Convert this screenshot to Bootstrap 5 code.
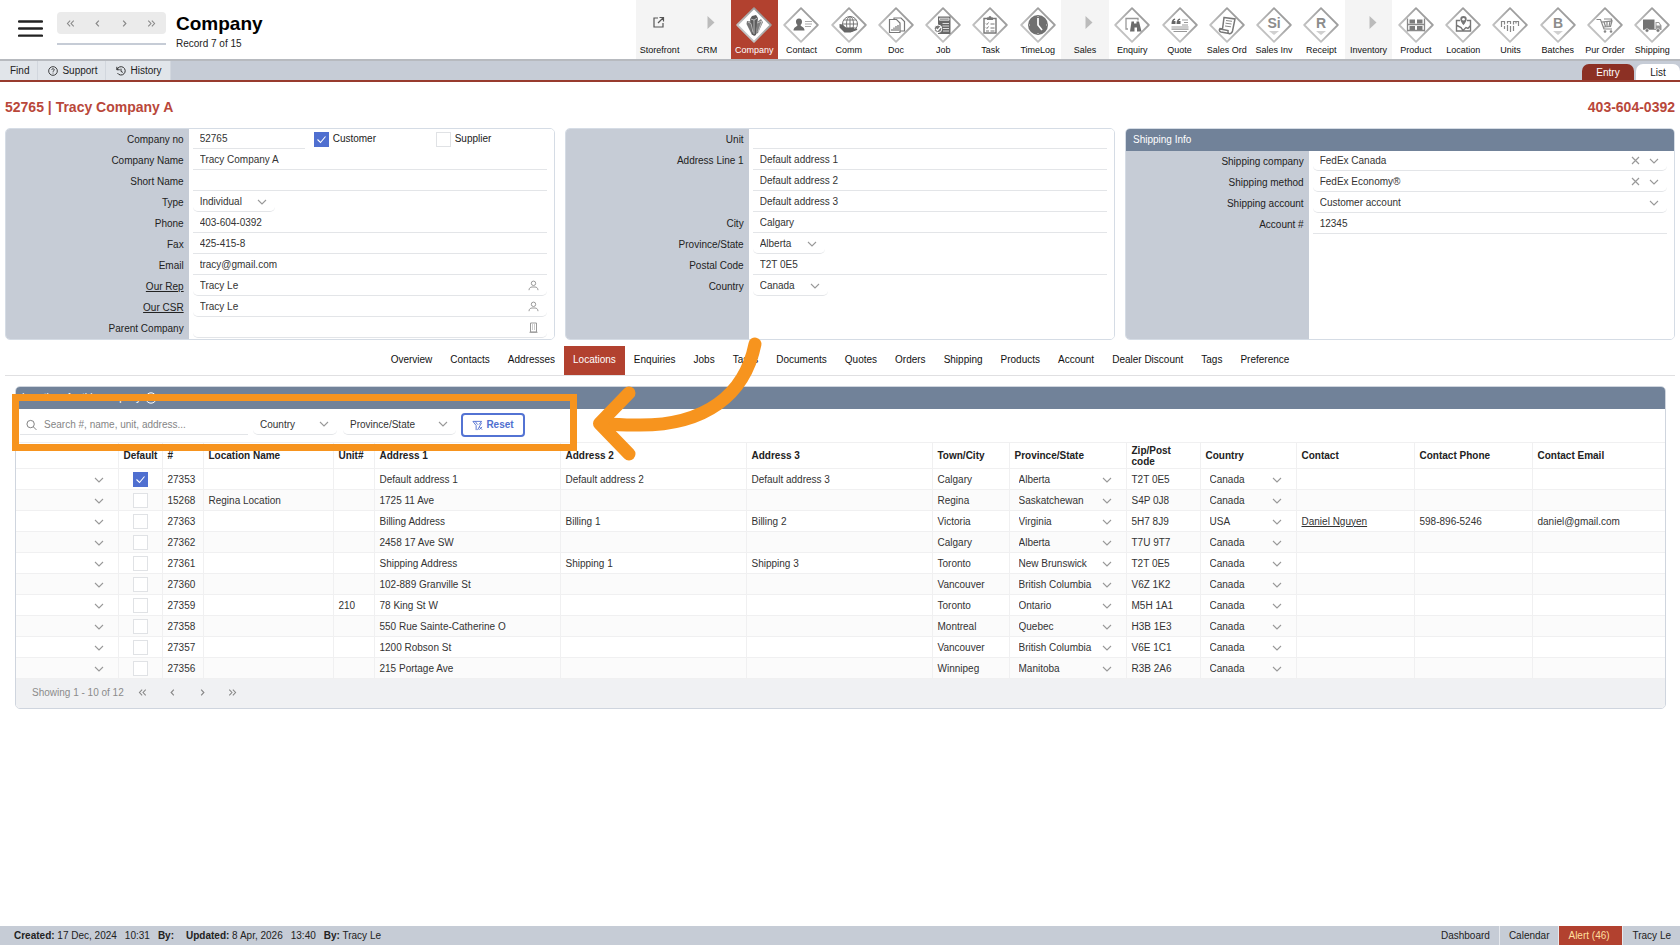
<!DOCTYPE html>
<html lang="en">
<head>
<meta charset="utf-8">
<meta name="viewport" content="width=device-width, initial-scale=1">
<title>Company – Tracy Company A</title>
<link href="https://cdn.jsdelivr.net/npm/bootstrap@5.3.0/dist/css/bootstrap.min.css" rel="stylesheet">
<style>
:root{--brick:#b2412f;--slate:#718299;--mist:#c6ccd6;--ink:#222;--hair:#e3e5e8;--orange:#f7941e;
--chev:url("data:image/svg+xml,%3Csvg xmlns='http://www.w3.org/2000/svg' viewBox='0 0 10 10'%3E%3Cpath d='M1 3l4 4 4-4' fill='none' stroke='%23999' stroke-width='1.1'/%3E%3C/svg%3E");
--tick:url("data:image/svg+xml,%3Csvg xmlns='http://www.w3.org/2000/svg' viewBox='0 0 15 15'%3E%3Cpath d='M3.5 7.5l3 3 5-6' fill='none' stroke='%23fff' stroke-width='1.1'/%3E%3C/svg%3E")}
body{font-family:"Liberation Sans",Arial,sans-serif;font-size:10px;line-height:12px;color:var(--ink);background:#fff}
a{color:inherit}
button{color:inherit}
/* top bar */
.topbar{height:61px;border-bottom:2px solid #b7babf}
.burger{width:25px;height:25px;margin:16px 0 0 18px}
.pager-col{width:109px;margin-left:14px}
.pager{height:22px;background:#ebebeb;border-radius:4px}
.pager-line{height:2px;background:var(--mist);margin-top:9px}
.pg{border:0;background:none;padding:0;width:27px;line-height:0}
.pg svg{width:9px;height:9px}
.heading{padding:12px 0 0 10px}
.page-title{font-size:19px;line-height:24px;font-weight:700;color:#000}
.page-sub{padding-top:2px}
.modules{width:1040px;margin-right:4px}
.module{flex:1 1 0;min-width:0;height:59px;text-align:center;text-decoration:none;font-size:9px;line-height:12px;color:#111;padding-top:7px;white-space:nowrap}
.module svg{width:36px;height:36px;display:block;margin:0 auto 1px}
.module.group{background:#f4f4f4}
.module.current{background:var(--brick);color:#fff}
/* secondary bar */
.subbar{height:21px;background:var(--mist);border-bottom:2px solid #983b2e}
.subbar .act{background:#e1e5ea;border:0;border-right:1px solid #d2d7de;padding:0 8px 0 10px;font-size:10px}
.subbar .act svg{width:10px;height:10px;margin-right:4px}
.mode{height:16px;border-radius:7px 7px 0 0;background:#fff;text-decoration:none;text-align:center;line-height:17px}
.mode.current{background:#8c3024;color:#fff;width:52px;margin-right:2px}
.mode.other{width:44px}
.record-head{height:46px;padding:4px 5px 0;font-size:14px;line-height:18px;font-weight:700;color:#b9473a}
/* field panels */
.panels{display:grid;grid-template-columns:repeat(3,1fr);gap:10px;padding:0 5px}
.panel{border:1px solid #d5dce5;border-radius:5px;overflow:hidden;min-height:212px;background:#fff}
.panel-head{background:var(--slate);color:#fff;height:22px;line-height:21px;padding-left:7px}
.fields{display:grid;grid-template-columns:1fr 2fr;grid-auto-rows:21px;background:linear-gradient(to right,var(--mist) 33.333%,#fff 33.333%);flex:1;align-content:start}
.fields>.lab{text-align:right;padding-right:5px;line-height:22px}
.fields>.val{padding:0 7px 0 4px;display:flex;align-items:center;height:20px}
.box{border:0;border-bottom:1px solid var(--hair);background:transparent;height:20px;padding:0 0 1px 7px;font-size:10px;line-height:18px;color:#333;width:100%;min-width:0;outline:0;border-radius:0}
.pick{appearance:none;border:0;border-bottom:1px solid var(--hair);border-radius:5px;background:transparent var(--chev) no-repeat right 8px center/10px;height:20px;padding:0 24px 0 7px;font-size:10px;color:#333;outline:0}
.pick.full{width:100%}
.w-type{width:82px}.w-prov{width:72px}.w-ctry{width:75px}.w-no{width:112px}
.slot{position:relative;width:100%}
.slot .box{border-radius:5px}
.slot .end{position:absolute;right:8px;top:4px;width:11px;height:11px;padding:0;border:0;background:none;line-height:0}
.slot .end.clear{right:26px}
.slot .end svg{width:11px;height:11px}
.tickbox{appearance:none;width:15px;height:15px;border:1px solid #e0e2e5;background:#fff center/15px no-repeat;margin:0;flex:none;display:block}
.tickbox:checked{background-color:#4f6fd0;border-color:#4f6fd0;background-image:var(--tick)}
.flag{display:flex;align-items:center;gap:4px}
.gap-a{margin-left:9px;width:122px}
/* tabs */
.tabs{margin:6px 5px 0;border-bottom:1px solid #e0e0e2;height:30px;line-height:28px}
.tabs a{padding:0 9px;text-decoration:none;height:29px;color:#111}
.tabs a.current{background:var(--brick);color:#fff}
/* locations */
.locations{margin:10px 14px 0 15px;border:1px solid #cfd5de;border-radius:5px;overflow:hidden}
.loc-head{background:var(--slate);color:#fff;height:22px;line-height:22px;padding-left:6px}
.loc-head svg{width:12px;height:12px;margin-left:4px}
.filters{height:33px;padding:4px 4px 0}
.find{width:228px;border-bottom:1px solid var(--hair);height:22px}
.find svg{width:12px;height:12px;margin:2px 0 0 6px}
.find .box{border:0;padding:2px 0 0 7px}
.find .box::placeholder{color:#858585;opacity:1}
.filters .pick{height:22px;padding-top:2px;background-color:#fff}
.f-ctry{width:84px;margin-left:5px}.f-prov{width:113px;margin:0 5px 0 6px}
.reset{width:64px;height:24px;border:2px solid #5373d3;border-radius:4px;background:#fff;color:#4f6fd0;padding:0;font-weight:700}
.reset svg{width:11px;height:11px;margin-right:3px}
.grid{table-layout:fixed;width:100%;border-collapse:collapse;margin:0}
.grid th,.grid td{border:1px solid #f0f0f1;padding:0 4px 0 5px;height:21px;line-height:12px;vertical-align:middle;white-space:nowrap;overflow:hidden}
.grid th{height:26px;line-height:11px;font-weight:700;white-space:normal}
.grid tr>:first-child{border-left:0}.grid tr>:last-child{border-right:0}
.grid tbody tr:nth-child(even){background:#fbfbfb}
.grid tbody td{color:#333;padding-top:1px}
.grid .pick{border:0;height:18px;width:100%;padding-left:4px;display:block;background-position:right 10px center}
.c1{width:102px}.c2{width:44px}.c3,.c5{width:41px}.c4{width:130px}.c9{width:77px}.c10{width:117px}.c11{width:74px}.c12{width:96px}.c13,.c14{width:118px}.c15{width:133px}
.grid-foot{height:29px;background:#f0f1f3;color:#8b8b8b;padding:0 0 2px 16px}
.grid-foot .pg{width:30px}
/* callout drawn over the filter row */
.stage{position:relative}
.callout{position:absolute;left:12px;top:8px;width:565px;height:57px;border:7px solid var(--orange);pointer-events:none}
.arrow{position:absolute;left:580px;top:-52px;width:190px;height:130px;pointer-events:none}
/* status bar */
.status{height:19px;background:var(--mist);line-height:20px;padding-left:14px}
.status a{padding:0 9px;text-decoration:none;border-left:1px solid #e6e9ee}
.status a.alerting{background:var(--brick);color:#ffdf9e;width:64px}
.status .set{margin-right:8px}
.status .set-end{margin-right:12px}
</style>
</head>
<body class="d-flex flex-column min-vh-100">
<svg width="0" height="0" class="position-absolute" aria-hidden="true">
<defs>
<linearGradient id="edge" x1="1" y1="0" x2="0" y2="1"><stop offset="0" stop-color="#8d8d8d"/><stop offset="1" stop-color="#d2d2d2"/></linearGradient>
<symbol id="dia" viewBox="0 0 36 36"><path d="M18 1.2L34.8 18 18 34.8 1.2 18z" fill="#fff" stroke="url(#edge)" stroke-width="1.8" stroke-linejoin="round"/></symbol>
<symbol id="l1" viewBox="0 0 10 10"><path d="M6.5 1.8L3.5 5l3 3.2" fill="none" stroke="#888" stroke-width="1.3"/></symbol>
<symbol id="r1" viewBox="0 0 10 10"><path d="M3.5 1.8L6.5 5l-3 3.2" fill="none" stroke="#888" stroke-width="1.3"/></symbol>
<symbol id="l2" viewBox="0 0 10 10"><path d="M4.6 1.8L1.6 5l3 3.2M8.6 1.8L5.6 5l3 3.2" fill="none" stroke="#888" stroke-width="1.2"/></symbol>
<symbol id="r2" viewBox="0 0 10 10"><path d="M1.4 1.8L4.4 5l-3 3.2M5.4 1.8L8.4 5l-3 3.2" fill="none" stroke="#888" stroke-width="1.2"/></symbol>
<symbol id="person" viewBox="0 0 11 11"><circle cx="5.5" cy="3.300" r="2.200" fill="none" stroke="#999"/><path d="M1 10.200C1 8 2.500 7 4 7h3c1.500 0 3 1 3 3.200" fill="none" stroke="#999"/></symbol>
<symbol id="cross" viewBox="0 0 11 11"><path d="M2 2l7 7M9 2L2 9" stroke="#999" stroke-width="1.200"/></symbol>
</defs></svg>

<header class="topbar d-flex align-items-start">
  <button class="burger border-0 bg-transparent p-0" type="button" aria-label="Menu"><svg class="d-block" width="25" height="25" viewBox="0 0 25 25"><path d="M1 5.500h23M1 12.500h23M1 19.700h23" stroke="#222" stroke-width="2.300" stroke-linecap="round"/></svg></button>
  <div class="pager-col pt-1">
    <div class="mt-2 pager d-flex align-items-center">
      <button class="pg" type="button" aria-label="First record"><svg><use href="#l2"/></svg></button>
      <button class="pg" type="button" aria-label="Previous record"><svg><use href="#l1"/></svg></button>
      <button class="pg" type="button" aria-label="Next record"><svg><use href="#r1"/></svg></button>
      <button class="pg" type="button" aria-label="Last record"><svg><use href="#r2"/></svg></button>
    </div>
    <div class="pager-line"></div>
  </div>
  <div class="heading">
    <h1 class="page-title mb-0">Company</h1>
    <div class="page-sub">Record 7 of 15</div>
  </div>
  <nav class="modules d-flex ms-auto" aria-label="Modules">
    <a class="module group" href="#"><svg viewBox="0 0 36 36"><path d="M16 11h-4v9h9v-4M16 16l5-5m-3.500-.5h4V14.500" fill="none" stroke="#555" stroke-width="1.200"/></svg>Storefront</a>
    <a class="module group" href="#"><svg viewBox="0 0 36 36"><path d="M18.500 9l7 6.500-7 6.500z" fill="#bbb"/></svg>CRM</a>
    <a class="module current" href="#" aria-current="page"><svg viewBox="0 0 36 36"><use href="#dia"/><path d="M16 28l-5.500-11 .5-3 4 .5L18 28z" fill="#777"/><path d="M16 27l-2-15 2-3 4-1 2 3-2 17-2 1z" fill="#5c5c5c"/><path d="M20 27l1-12 4-3 2 3-5 11z" fill="#808080"/><path d="M12 15l3 1.500 2 9M14.500 12l3.500 1 3.500-2M18 13v14M21 16l5-2-4 11" stroke="#ddd" stroke-width=".7" fill="none"/></svg>Company</a>
    <a class="module" href="#"><svg viewBox="0 0 36 36"><use href="#dia"/><path d="M16 11.500c2 0 3.200 1.500 3 3.500-.1 1.500-.9 2.500-1.500 3 0 1.500 4 1.800 4 5.500h-11c0-3.700 4-4 4-5.500-.6-.5-1.400-1.500-1.500-3-.2-2 1-3.500 3-3.500z" fill="#6b6b6b"/><path d="M22 14.500h7M22 17h7M22 19.500h6" stroke="#aaa"/></svg>Contact</a>
    <a class="module" href="#"><svg viewBox="0 0 36 36"><use href="#dia"/><g fill="none" stroke="#777" stroke-width="1"><circle cx="19" cy="17" r="7.500"/><ellipse cx="19" cy="17" rx="3.500" ry="7.500"/><path d="M11.500 17h15M12.800 13h12.400M12.800 21h12.400M19 9.500v15"/></g><path d="M8.500 17l3 .5 4 3.500 7-.5c1 0 1 1.500 0 1.700l-4 .8 7-1.500c1.200 0 1 1.300 0 1.800l-6 2.200h-6l-5-5z" fill="#666"/></svg>Comm</a>
    <a class="module" href="#"><svg viewBox="0 0 36 36"><use href="#dia"/><g fill="#fff" stroke="#777" stroke-width="1.200"><path d="M16 11h7l3.500 3.500V24H16z"/><path d="M11.500 12.500h7l3.500 3.500v9.500H11.500z"/></g><path d="M14 24v-2M16 24v-3.500M18 24v-5M20 24v-6" stroke="#777" stroke-width="1.200"/></svg>Doc</a>
    <a class="module" href="#"><svg viewBox="0 0 36 36"><use href="#dia"/><path d="M13 9.500h12.500v17.500H13z" fill="#686868"/><path d="M14.500 11.200h9.500v2h-9.500zM17.500 16.500h6.500M17.500 19h6.500M18 21.500h6M18 24h6" fill="#888" stroke="#ddd" stroke-width="1"/><circle cx="13" cy="21.800" r="3.800" fill="#777" stroke="#fff"/><path d="M11 21.800l1.500 1.700 3.500-4" fill="none" stroke="#fff" stroke-width="1.300"/></svg>Job</a>
    <a class="module" href="#"><svg viewBox="0 0 36 36"><use href="#dia"/><path d="M12 11.500h12V26H12z" fill="none" stroke="#777" stroke-width="1.400"/><path d="M15 13v-2.500h1.500a1.500 1.500 0 013 0H21V13z" fill="#777"/><path d="M14 16.500l1 1 1.500-2M14 20.500l1 1 1.500-2M18.500 17h4M18.500 21h4M14 24h3M18.500 24h4" fill="none" stroke="#777"/></svg>Task</a>
    <a class="module" href="#"><svg viewBox="0 0 36 36"><use href="#dia"/><circle cx="18" cy="18" r="10" fill="#707070"/><path d="M18 11v7l4 5" fill="none" stroke="#fff" stroke-width="1.700"/><path d="M18 9v1M27 18h-1M9 18h1M18 27v-1" stroke="#ddd"/></svg>TimeLog</a>
    <a class="module group" href="#"><svg viewBox="0 0 36 36"><path d="M18.500 9l7 6.500-7 6.500z" fill="#bbb"/></svg>Sales</a>
    <a class="module" href="#"><svg viewBox="0 0 36 36"><use href="#dia"/><path d="M14 22h-2V11.500h12v2" fill="none" stroke="#999" stroke-width="1.300"/><path d="M17.500 14.500h2.500v2h2.500v-2H25l2.500 10H23V20.500h-2.500v4H16z" fill="#6b6b6b"/></svg>Enquiry</a>
    <a class="module" href="#"><svg viewBox="0 0 36 36"><use href="#dia"/><path d="M13 11.500c-2.500.5-3.500 2.200-3.500 5.500h4v-3h-1.800c.1-.6.600-1 1.500-1.200zM18 11.500c-2.500.5-3.500 2.200-3.500 5.500h4v-3h-1.800c.1-.6.600-1 1.500-1.200z" fill="#666"/><path d="M20 13h6M22 15.500h4M20 18h6M9.500 20h17M9.500 22.200h17M11.500 24.500h13.500" stroke="#999" stroke-width="1.200"/></svg>Quote</a>
    <a class="module" href="#"><svg viewBox="0 0 36 36"><use href="#dia"/><path d="M15 10.500l11 1.500-2.500 12c-.5 2-2 3-3.500 2.500l-8-1.500c-2-.5-2-2.500-1-3.500l2.500.5zM11 22l8 1.500c-.3 1.500 0 2.500 1 3" fill="none" stroke="#777" stroke-width="1.500"/><path d="M17 13.500l6 .8M16.500 16.200l6 .8M16 19l6 .8" stroke="#888"/></svg>Sales Ord</a>
    <a class="module" href="#"><svg viewBox="0 0 36 36"><use href="#dia"/><text x="18" y="21" text-anchor="middle" font-size="14" font-weight="700" fill="#8c8c8c">Si</text><path d="M13 24h10l-5 4z" fill="#d0d0d0"/></svg>Sales Inv</a>
    <a class="module" href="#"><svg viewBox="0 0 36 36"><use href="#dia"/><text x="18" y="21" text-anchor="middle" font-size="14" font-weight="700" fill="#8c8c8c">R</text><path d="M13 24h10l-5 4z" fill="#d0d0d0"/></svg>Receipt</a>
    <a class="module group" href="#"><svg viewBox="0 0 36 36"><path d="M18.500 9l7 6.500-7 6.500z" fill="#bbb"/></svg>Inventory</a>
    <a class="module" href="#"><svg viewBox="0 0 36 36"><use href="#dia"/><path d="M9.500 11.500v13M26.500 11.500v13M9 17.500h18M9 23.500h18" stroke="#888" stroke-width="1.300"/><path d="M11.500 12.500h5.500v4h-5.500zM19 12.500h5.500v4H19zM11.500 19h5.500v4h-5.500zM19 19h5.500v4H19z" fill="#7c7c7c"/></svg>Product</a>
    <a class="module" href="#"><svg viewBox="0 0 36 36"><use href="#dia"/><path d="M15 13.500h-3.500v10.500h14V13.500H22M12 18.500l4 2 2 3 3-3 2 1 2.500-3" fill="none" stroke="#777" stroke-width="1.400"/><path d="M18.500 9a3.200 3.200 0 013.200 3.300c0 2.200-3.200 6-3.200 6s-3.200-3.800-3.200-6A3.200 3.200 0 0118.500 9z" fill="#777"/><circle cx="18.500" cy="12.300" r="1.300" fill="#fff"/></svg>Location</a>
    <a class="module" href="#"><svg viewBox="0 0 36 36"><use href="#dia"/><path d="M9.500 14v6M12.500 14v3.500M12.500 19v3M15.500 14v2.500M15.500 18v6M18.500 14v3M18.500 19v6M21.500 14v3.500M21.500 19v5M24 14v2.500M26.500 14v5M9 14.500h4M15 14.500h4M21 14.500h6" stroke="#888" stroke-width="1.200"/></svg>Units</a>
    <a class="module" href="#"><svg viewBox="0 0 36 36"><use href="#dia"/><text x="18" y="21" text-anchor="middle" font-size="14" font-weight="700" fill="#8c8c8c">B</text><path d="M13 24h10l-5 4z" fill="#d0d0d0"/></svg>Batches</a>
    <a class="module" href="#"><svg viewBox="0 0 36 36"><use href="#dia"/><path d="M9.500 12.500h4l3.500 9.500h8M14.500 15l10.500-1-1.500 5.500-7.500.5M17 15l1.500 4.500M20 14.500v5M23 14.500l-1 5M17 12h7.500v2" fill="none" stroke="#888" stroke-width="1.200"/><circle cx="18" cy="24.500" r="1.300" fill="#888"/><circle cx="24" cy="24.500" r="1.300" fill="#888"/></svg>Pur Order</a>
    <a class="module" href="#"><svg viewBox="0 0 36 36"><use href="#dia"/><path d="M9 12.500h11.500v9.500H9z" fill="#737373"/><path d="M21.500 15h3.500l2.500 3.500V23H9v-1h12.500z" fill="#999"/><path d="M22.500 16h2.200l1.500 2.500h-3.700z" fill="#fff"/><circle cx="13" cy="23.500" r="1.800" fill="#777" stroke="#fff" stroke-width=".6"/><circle cx="24" cy="23.500" r="1.800" fill="#777" stroke="#fff" stroke-width=".6"/></svg>Shipping</a>
  </nav>
</header>

<div class="subbar d-flex">
  <button class="act" type="button">Find</button>
  <button class="act d-flex align-items-center" type="button"><svg viewBox="0 0 12 12"><circle cx="6" cy="6" r="5.200" fill="none" stroke="#222"/><path d="M4.500 4.800c0-2 3-2 3-.2 0 1-1.500 1.200-1.500 2.400M6 8v1" fill="none" stroke="#222"/></svg>Support</button>
  <button class="act d-flex align-items-center" type="button"><svg viewBox="0 0 12 12"><path d="M1 1v3.500h3.500M1.300 4.200A5 5 0 111.800 8.500M6 3.200V6.500l2.200 1.200" fill="none" stroke="#222" stroke-width="1.100"/></svg>History</button>
  <a class="mode current ms-auto align-self-end" href="#">Entry</a>
  <a class="mode other align-self-end" href="#">List</a>
</div>

<main class="flex-grow-1">
  <div class="record-head d-flex justify-content-between align-items-center"><span>52765 | Tracy Company A</span><span>403-604-0392</span></div>

  <section class="panels">
    <div class="panel d-flex flex-column">
      <div class="fields">
        <label class="lab" for="cno">Company no</label>
        <div class="val"><input class="box w-no flex-shrink-0" id="cno" value="52765"><span class="flag gap-a"><input class="tickbox" type="checkbox" id="cust" checked><label for="cust">Customer</label></span><span class="flag"><input class="tickbox" type="checkbox" id="supp"><label for="supp">Supplier</label></span></div>
        <label class="lab" for="cname">Company Name</label><div class="val"><input class="box" id="cname" value="Tracy Company A"></div>
        <label class="lab" for="sname">Short Name</label><div class="val"><input class="box" id="sname"></div>
        <label class="lab" for="ctype">Type</label><div class="val"><select class="pick w-type" id="ctype"><option>Individual</option></select></div>
        <label class="lab" for="phone">Phone</label><div class="val"><input class="box" id="phone" value="403-604-0392"></div>
        <label class="lab" for="fax">Fax</label><div class="val"><input class="box" id="fax" value="425-415-8"></div>
        <label class="lab" for="email">Email</label><div class="val"><input class="box" id="email" value="tracy@gmail.com"></div>
        <label class="lab text-decoration-underline" for="rep">Our Rep</label><div class="val"><div class="slot"><input class="box" id="rep" value="Tracy Le"><button class="end" type="button" aria-label="Choose rep"><svg><use href="#person"/></svg></button></div></div>
        <label class="lab text-decoration-underline" for="csr">Our CSR</label><div class="val"><div class="slot"><input class="box" id="csr" value="Tracy Le"><button class="end" type="button" aria-label="Choose CSR"><svg><use href="#person"/></svg></button></div></div>
        <label class="lab" for="parent">Parent Company</label><div class="val"><div class="slot"><input class="box" id="parent"><button class="end" type="button" aria-label="Choose company"><svg viewBox="0 0 11 11"><path d="M2.500 1h6v9h-6zM4 3h1m1 0h1M4 5h1m1 0h1M4 7h1m1 0h1M1.500 10.300h8" fill="none" stroke="#999"/></svg></button></div></div>
      </div>
    </div>
    <div class="panel d-flex flex-column">
      <div class="fields">
        <label class="lab" for="unit">Unit</label><div class="val"><input class="box" id="unit"></div>
        <label class="lab" for="ad1">Address Line 1</label><div class="val"><input class="box" id="ad1" value="Default address 1"></div>
        <span></span><div class="val"><input class="box" aria-label="Address line 2" value="Default address 2"></div>
        <span></span><div class="val"><input class="box" aria-label="Address line 3" value="Default address 3"></div>
        <label class="lab" for="city">City</label><div class="val"><input class="box" id="city" value="Calgary"></div>
        <label class="lab" for="prov">Province/State</label><div class="val"><select class="pick w-prov" id="prov"><option>Alberta</option></select></div>
        <label class="lab" for="zip">Postal Code</label><div class="val"><input class="box" id="zip" value="T2T 0E5"></div>
        <label class="lab" for="ctry">Country</label><div class="val"><select class="pick w-ctry" id="ctry"><option>Canada</option></select></div>
      </div>
    </div>
    <div class="panel d-flex flex-column">
      <div class="panel-head">Shipping Info</div>
      <div class="fields">
        <label class="lab" for="shc">Shipping company</label><div class="val"><div class="slot"><select class="pick full" id="shc"><option>FedEx Canada</option></select><button class="end clear" type="button" aria-label="Clear company"><svg><use href="#cross"/></svg></button></div></div>
        <label class="lab" for="shm">Shipping method</label><div class="val"><div class="slot"><select class="pick full" id="shm"><option>FedEx Economy®</option></select><button class="end clear" type="button" aria-label="Clear method"><svg><use href="#cross"/></svg></button></div></div>
        <label class="lab" for="sha">Shipping account</label><div class="val"><select class="pick full" id="sha"><option>Customer account</option></select></div>
        <label class="lab" for="acc">Account #</label><div class="val"><input class="box" id="acc" value="12345"></div>
      </div>
    </div>
  </section>

  <nav class="tabs d-flex justify-content-center" aria-label="Company sections">
    <a href="#">Overview</a><a href="#">Contacts</a><a href="#">Addresses</a><a class="current" href="#" aria-current="page">Locations</a><a href="#">Enquiries</a><a href="#">Jobs</a><a href="#">Tasks</a><a href="#">Documents</a><a href="#">Quotes</a><a href="#">Orders</a><a href="#">Shipping</a><a href="#">Products</a><a href="#">Account</a><a href="#">Dealer Discount</a><a href="#">Tags</a><a href="#">Preference</a>
  </nav>

  <div class="stage">
    <section class="locations">
      <div class="loc-head d-flex align-items-center">Locations for this company<svg viewBox="0 0 12 12"><circle cx="6" cy="6" r="5.200" fill="none" stroke="#fff"/><path d="M6 5.500V9M6 3v1" stroke="#fff"/></svg></div>
      <div class="filters d-flex align-items-start">
        <div class="find d-flex align-items-center"><svg viewBox="0 0 12 12"><circle cx="5" cy="5" r="4" fill="none" stroke="#777"/><path d="M8 8l3.300 3.300" stroke="#777"/></svg><input class="box" type="text" aria-label="Search locations" placeholder="Search #, name, unit, address..."></div>
        <select class="pick f-ctry" aria-label="Country filter"><option>Country</option></select>
        <select class="pick f-prov" aria-label="Province filter"><option>Province/State</option></select>
        <button class="reset d-flex align-items-center justify-content-center" type="button"><svg viewBox="0 0 12 12"><path d="M1 1.500h9.500L7.500 5M1 1.500l3.500 4.500V11M10.500 3L6 11M8 7.500l3 3M11 7.500l-3 3M3.500 1.500l2.500 3.500" fill="none" stroke="#4f6fd0"/></svg>Reset</button>
      </div>
      <table class="grid">
        <colgroup><col class="c1"><col class="c2"><col class="c3"><col class="c4"><col class="c5"><col><col><col><col class="c9"><col class="c10"><col class="c11"><col class="c12"><col class="c13"><col class="c14"><col class="c15"></colgroup>
        <thead><tr><th></th><th>Default</th><th>#</th><th>Location Name</th><th>Unit#</th><th>Address 1</th><th>Address 2</th><th>Address 3</th><th>Town/City</th><th>Province/State</th><th>Zip/Post code</th><th>Country</th><th>Contact</th><th>Contact Phone</th><th>Contact Email</th></tr></thead>
        <tbody id="rows"></tbody>
      </table>
      <div class="grid-foot d-flex align-items-center"><span class="me-1">Showing 1 - 10 of 12</span>
        <button class="pg" type="button" aria-label="First page"><svg><use href="#l2"/></svg></button>
        <button class="pg" type="button" aria-label="Previous page"><svg><use href="#l1"/></svg></button>
        <button class="pg" type="button" aria-label="Next page"><svg><use href="#r1"/></svg></button>
        <button class="pg" type="button" aria-label="Last page"><svg><use href="#r2"/></svg></button>
      </div>
    </section>
    <div class="callout"></div>
    <svg class="arrow" viewBox="580 324 190 130" aria-hidden="true"><g transform="translate(0 -10)" fill="none" stroke="#f7941e" stroke-width="13" stroke-linecap="round" stroke-linejoin="round"><path d="M755 344C745 394 706 427 634 425Q620 425 602 423.500"/><path d="M629 393L599.500 423.500 629 454"/></g></svg>
  </div>
</main>

<footer class="status d-flex">
  <span class="set"><b>Created:</b> 17 Dec, 2024</span><span class="set">10:31</span><b class="set-end">By:</b><span class="set"><b>Updated:</b> 8 Apr, 2026</span><span class="set">13:40</span><span><b>By:</b> Tracy Le</span>
  <nav class="d-flex ms-auto" aria-label="Shortcuts"><a class="border-0" href="#">Dashboard</a><a href="#">Calendar</a><a class="alerting" href="#">Alert (46)</a><a href="#">Tracy Le</a></nav>
</footer>

<script src="https://cdn.jsdelivr.net/npm/bootstrap@5.3.0/dist/js/bootstrap.bundle.min.js"></script>
<script>
// number, name, unit, address 1-3, city, province, postcode, country, contact, phone, email
const locations = [
  ["27353","","","Default address 1","Default address 2","Default address 3","Calgary","Alberta","T2T 0E5","Canada","","",""],
  ["15268","Regina Location","","1725 11 Ave","","","Regina","Saskatchewan","S4P 0J8","Canada","","",""],
  ["27363","","","Billing Address","Billing 1","Billing 2","Victoria","Virginia","5H7 8J9","USA","Daniel Nguyen","598-896-5246","daniel@gmail.com"],
  ["27362","","","2458 17 Ave SW","","","Calgary","Alberta","T7U 9T7","Canada","","",""],
  ["27361","","","Shipping Address","Shipping 1","Shipping 3","Toronto","New Brunswick","T2T 0E5","Canada","","",""],
  ["27360","","","102-889 Granville St","","","Vancouver","British Columbia","V6Z 1K2","Canada","","",""],
  ["27359","","210","78 King St W","","","Toronto","Ontario","M5H 1A1","Canada","","",""],
  ["27358","","","550 Rue Sainte-Catherine O","","","Montreal","Quebec","H3B 1E3","Canada","","",""],
  ["27357","","","1200 Robson St","","","Vancouver","British Columbia","V6E 1C1","Canada","","",""],
  ["27356","","","215 Portage Ave","","","Winnipeg","Manitoba","R3B 2A6","Canada","","",""]
];
const pick = (label, text) => `<select class="pick" aria-label="${label}"><option>${text}</option></select>`;
document.getElementById("rows").innerHTML = locations.map((r, i) => {
  const cells = r.map((v, c) => {
    if (c === 7) v = pick("Province", v);
    if (c === 9) v = pick("Country", v);
    if (c === 10 && v) v = `<a href="#">${v}</a>`;
    return `<td>${v}</td>`;
  }).join("");
  return `<tr><td>${pick("Row actions", "")}</td><td><input class="tickbox mx-auto" type="checkbox" aria-label="Default location ${r[0]}"${i ? "" : " checked"}></td>${cells}</tr>`;
}).join("");
</script>
</body>
</html>
